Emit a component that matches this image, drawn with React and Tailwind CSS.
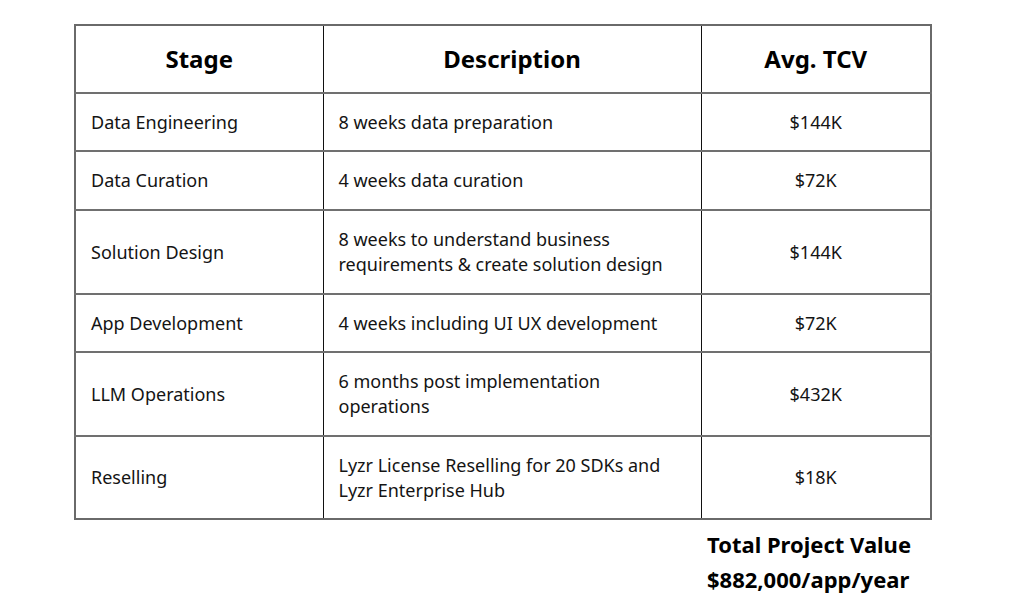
import React from "react";

const rows = [
  { stage: "Data Engineering", desc: ["8 weeks data preparation"], tcv: "$144K", h: "h-[58px]" },
  { stage: "Data Curation", desc: ["4 weeks data curation"], tcv: "$72K", h: "h-[59px]" },
  {
    stage: "Solution Design",
    desc: ["8 weeks to understand business", "requirements & create solution design"],
    tcv: "$144K",
    h: "h-[84px]",
  },
  { stage: "App Development", desc: ["4 weeks including UI UX development"], tcv: "$72K", h: "h-[58px]" },
  {
    stage: "LLM Operations",
    desc: ["6 months post implementation", "operations"],
    tcv: "$432K",
    h: "h-[84px]",
  },
  {
    stage: "Reselling",
    desc: ["Lyzr License Reselling for 20 SDKs and", "Lyzr Enterprise Hub"],
    tcv: "$18K",
    h: "h-[83px]",
  },
];

export default function App() {
  return (
    <div
      className="w-[1023px] h-[611px] bg-white text-[#141414] pt-[24px] pl-[74px]"
      style={{ fontFamily: '"Noto Sans", "Open Sans", sans-serif' }}
    >
      <table className="w-[856px] border-collapse table-fixed border-2 border-[#6a6a6a]">
        <colgroup>
          <col className="w-[248px]" />
          <col className="w-[378px]" />
          <col className="w-[230px]" />
        </colgroup>
        <thead>
          <tr className="h-[68px] border-b-2 border-[#707070]">
            <th className="text-[24px] font-bold text-black text-center border-r border-[#111]">Stage</th>
            <th className="text-[24px] font-bold text-black text-center border-r border-[#111]">Description</th>
            <th className="text-[24px] font-bold text-black text-center">Avg. TCV</th>
          </tr>
        </thead>
        <tbody>
          {rows.map((r, i) => (
            <tr
              key={r.stage}
              className={`${r.h} ${i < rows.length - 1 ? "border-b-2 border-[#707070]" : ""}`}
            >
              <td className="pl-[15px] text-[18px] border-r border-[#111]">{r.stage}</td>
              <td className="pl-[15px] text-[18px] leading-[25px] border-r border-[#111]">
                {r.desc.map((d) => (
                  <div key={d}>{d}</div>
                ))}
              </td>
              <td className="text-center text-[18px]">{r.tcv}</td>
            </tr>
          ))}
        </tbody>
      </table>
      <div className="ml-[633px] mt-[7px] text-[22px] font-bold text-black leading-[35px]">
        <div>Total Project Value</div>
        <div>$882,000/app/year</div>
      </div>
    </div>
  );
}
